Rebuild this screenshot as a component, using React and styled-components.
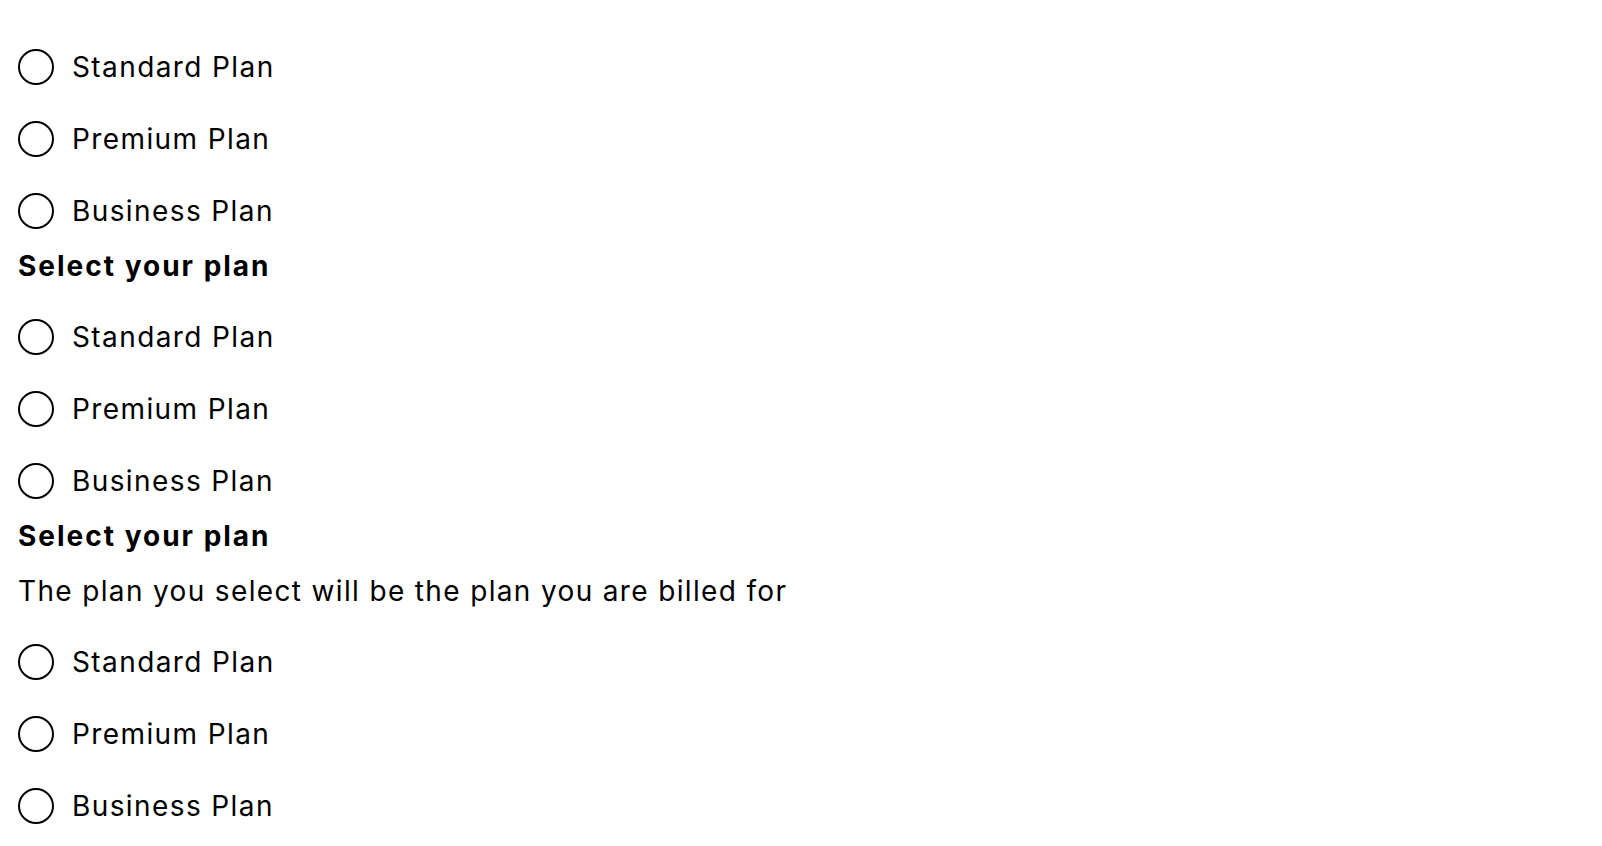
import React from "react";
import styled, { createGlobalStyle } from "styled-components";

const GlobalStyle = createGlobalStyle`
  html, body { margin: 0; padding: 0; background: #ffffff; }
  body { font-family: Inter, "Noto Sans", sans-serif; color: #000000; }
`;

const Page = styled.div`
  display: flex;
  flex-direction: column;
  gap: 20px;
  padding: 49px 18px 20px;
`;

const Group = styled.div`
  display: flex;
  flex-direction: column;
  gap: 36px;
`;

const Header = styled.div`
  display: flex;
  flex-direction: column;
  gap: 21px;
`;

const Legend = styled.div`
  font-size: 28px;
  font-weight: 700;
  line-height: 34px;
  height: 34px;
  letter-spacing: 2px;
`;

const Description = styled.div`
  font-size: 28px;
  font-weight: 400;
  line-height: 34px;
  height: 34px;
  letter-spacing: 1.35px;
`;

const Row = styled.label`
  display: flex;
  align-items: center;
  gap: 18px;
  height: 36px;
  cursor: pointer;
`;

const Circle = styled.span`
  box-sizing: border-box;
  width: 36px;
  height: 36px;
  border: 2px solid #000000;
  border-radius: 50%;
  flex: none;
`;

const Label = styled.span`
  font-size: 28px;
  line-height: 36px;
  letter-spacing: 1.4px;
`;

const plans = ["Standard Plan", "Premium Plan", "Business Plan"];

function RadioGroup({ legend, description }) {
  return (
    <Group>
      {(legend || description) && (
        <Header>
          {legend && <Legend>{legend}</Legend>}
          {description && <Description>{description}</Description>}
        </Header>
      )}
      {plans.map((p) => (
        <Row key={p}>
          <Circle />
          <Label>{p}</Label>
        </Row>
      ))}
    </Group>
  );
}

export default function App() {
  return (
    <>
      <GlobalStyle />
      <Page>
        <RadioGroup />
        <RadioGroup legend="Select your plan" />
        <RadioGroup
          legend="Select your plan"
          description="The plan you select will be the plan you are billed for"
        />
      </Page>
    </>
  );
}
